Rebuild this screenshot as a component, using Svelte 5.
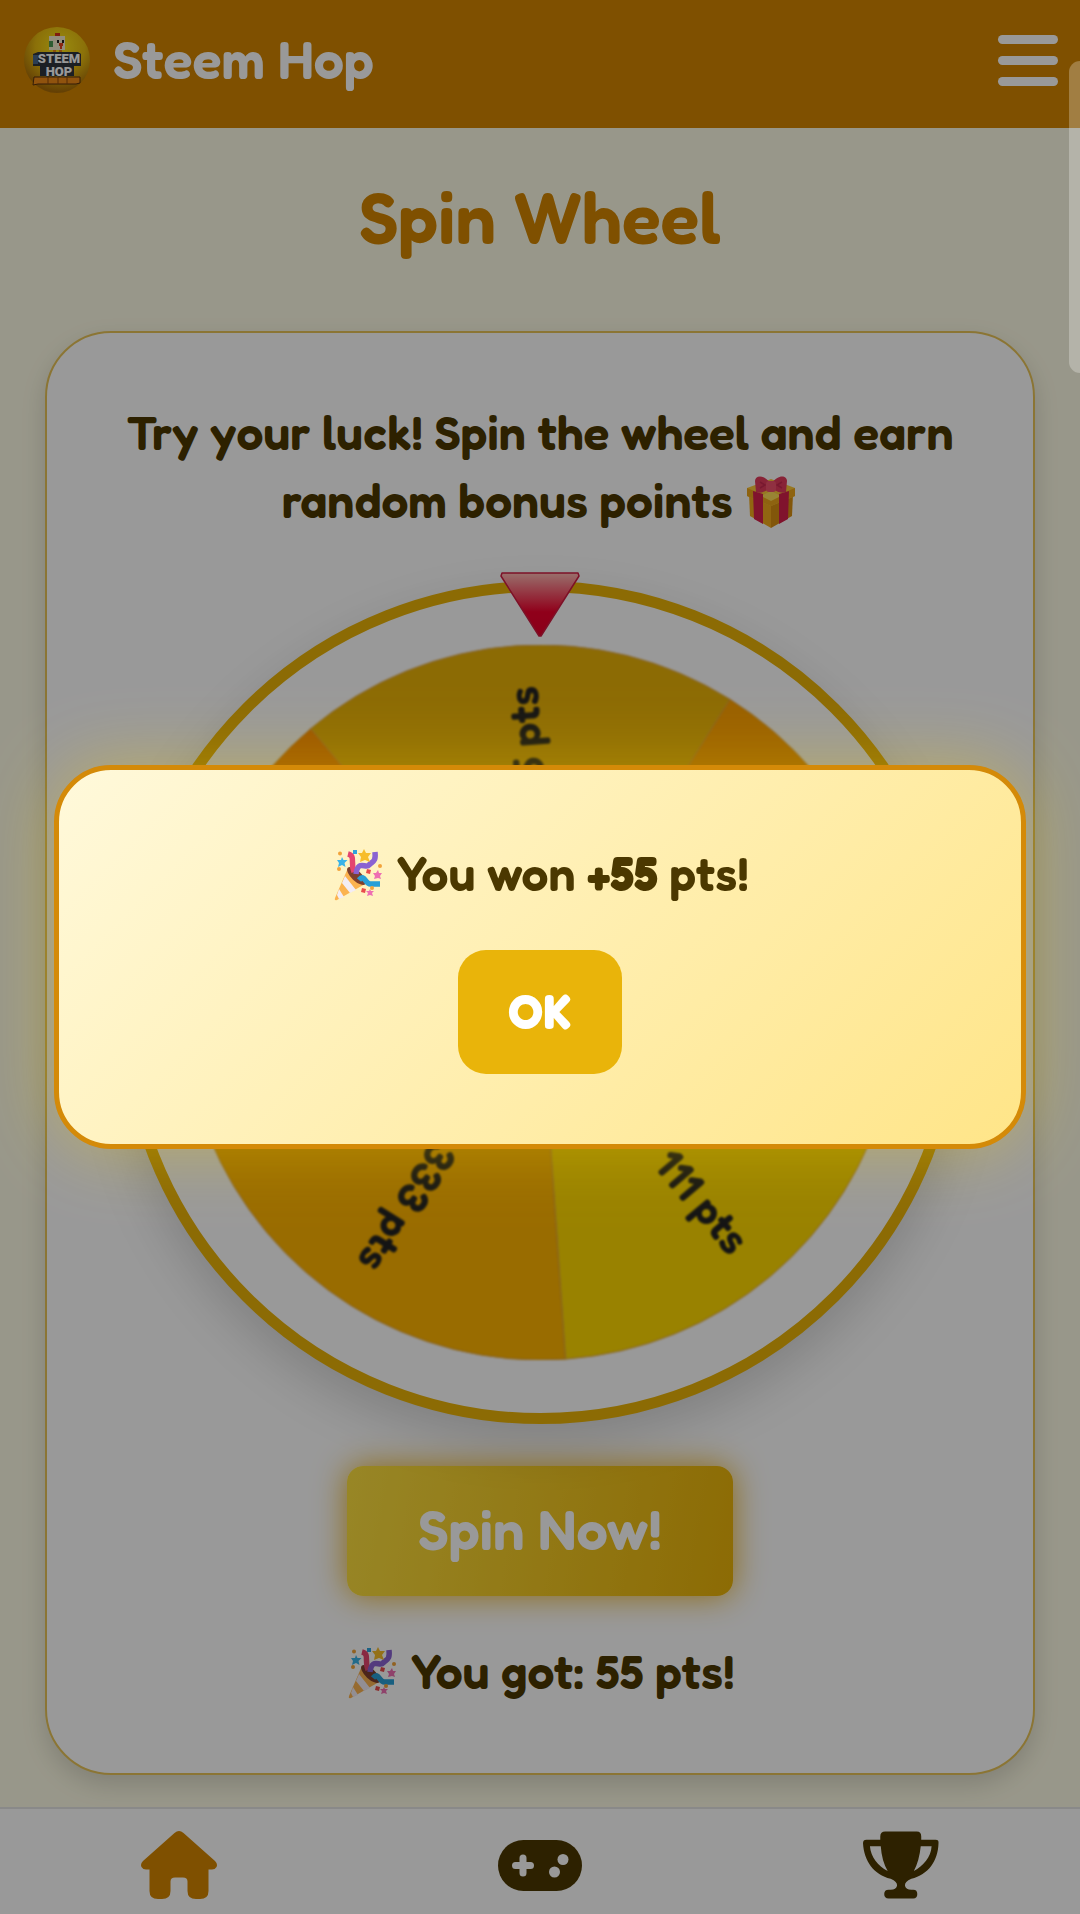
<script>
  let open = $state(true);
  const prize = 55;
  const size = 358;
  const tilt = -4;
  const slices = [
    { label: '55 pts', color: '#eab308' },
    { label: '77 pts', color: '#ffa000' },
    { label: '111 pts', color: '#ffd900' },
    { label: '333 pts', color: '#ffb400' },
    { label: '22 pts', color: '#ff8f00' }
  ];
  const step = 360 / slices.length;

  function point(deg) {
    const a = (deg * Math.PI) / 180;
    return `${(Math.sin(a) * size).toFixed(2)} ${(-Math.cos(a) * size).toFixed(2)}`;
  }
  function wedge(i) {
    const mid = tilt + i * step;
    return `M0 0L${point(mid - step / 2)}A${size} ${size} 0 0 1 ${point(mid + step / 2)}Z`;
  }
</script>

{#snippet party()}
  <svg class="emoji" viewBox="0 0 48 52" role="img" aria-label="Party popper">
    <path d="M14 19L31 35L3 51Q0 52 1 49Z" fill="#fbb350" />
    <path d="M11 27L22 41L16 44L8 34Z M5 40L10 48L5 50L3 46Z" fill="#f3edf5" />
    <ellipse cx="22.500" cy="27" rx="12" ry="5" transform="rotate(43 22.500 27)" fill="#7d3f2d" />
    <path d="M14 5C22 7 16 14 20 23" fill="none" stroke="#e4456f" stroke-width="5.500" />
    <path d="M22 25C24 10 32 20 35 16C39 12 42 13 41 3" fill="none" stroke="#8a63d2" stroke-width="5.500" />
    <path d="M25 31C31 24 31 36 37 35Q42 35 46 35" fill="none" stroke="#289fd6" stroke-width="5.500" />
    <path d="M30 0l2 4 5 0-3 4 2 5-5-2-5 2 1-5-3-4 4 0z" fill="#f7bd2b" />
    <path d="M8 8l1.500 3 4 0-3 3 1 4-3.500-2-4 2 1-4-2-3 4 0z" fill="#3bb3e8" />
    <path d="M44 21l1 3 3 0-2 3 1 3-3-1-4 1 1-3-2-3 3 0z" fill="#ee6fb2" />
    <path d="M36 40l1 2 3 0-2 2 1 3-3-1-3 1 1-3-2-2 3 0z" fill="#ee6fb2" />
    <path d="M19 1h4v4h-4z" fill="#2fa3dc" />
    <path d="M33 20l4 1-1 4-4-1zM28 39l4 1-1 4-4-1z" fill="#e94b4b" />
    <circle cx="6" cy="4.500" r="2" fill="#f2a33a" />
    <circle cx="5" cy="20" r="2" fill="#f2a33a" />
    <circle cx="46" cy="17" r="2" fill="#f2a33a" />
    <circle cx="38" cy="39" r="2" fill="#f2a33a" />
  </svg>
{/snippet}

<div class="page">
  <header>
    <a class="brand" href="#home">
      <svg class="logo" viewBox="0 0 66 66" aria-hidden="true">
        <defs>
          <radialGradient id="sun" cx="55%" cy="30%" r="68%">
            <stop offset="0" stop-color="#ffe818" />
            <stop offset=".55" stop-color="#e8bc10" />
            <stop offset="1" stop-color="#a86c08" />
          </radialGradient>
        </defs>
        <circle cx="33" cy="33" r="33" fill="url(#sun)" />
        <path d="M31 6h5v4h-5z" fill="#d8301a" />
        <path d="M25 9h16v14H25z" fill="#f5edd0" />
        <path d="M25 14h4v6h-4z" fill="#4f9a55" />
        <path d="M33 13h2v3h-2zM38 13h2v3h-2z" fill="#222" />
        <path d="M35 16h4v3h-1v3h-2v-3h-1z" fill="#e5401c" />
        <path d="M29 23h3v3h-3zM35 23h3v3h-3z" fill="#e88716" />
        <path d="M9 27l5-2h40l3 2v12h-7v10H16v-10H9z" fill="#30343c" />
        <path d="M9 28h5v9H9z" fill="#48678a" />
        <path d="M10 50h46v6l-4 1H14l-5 1z" fill="#f08a18" stroke="#56300c" stroke-width="1" />
        <path d="M24 50v7M34 50v7M43 50v7" stroke="#8c4a0a" stroke-width="1" />
        <text class="logo-text" x="35" y="36">STEEM</text>
        <text class="logo-text" x="35" y="49">HOP</text>
      </svg>
      <span>Steem Hop</span>
    </a>
    <button class="menu" aria-label="Menu"><i></i><i></i><i></i></button>
  </header>

  <main>
    <h1>Spin Wheel</h1>
    <section class="card">
      <p>
        Try your luck! Spin the wheel and earn random bonus points
        <svg class="emoji" viewBox="0 0 48 52" role="img" aria-label="Gift">
          <path d="M2 18L24 27V52L3 40Z" fill="#f2aa1d" />
          <path d="M46 18L24 27V52L45 40Z" fill="#d98f12" />
          <path d="M0 12L24 3L48 12V20L24 30L0 20Z" fill="#fcc93a" />
          <path d="M0 12L24 22L48 12V20L24 30L0 20Z" fill="#eda51b" />
          <path d="M24 15L34 20L24 25L14 20Z" fill="#ffdc58" />
          <path d="M6 15L16 18V48L7 43ZM42 15L32 18V48L41 43Z" fill="#d5214c" />
          <path d="M24 8C16-3 8 0 8 5L9 16C14 18 20 15 24 11C28 15 34 18 39 16L40 5C40 0 32-3 24 8Z" fill="#e33b5c" />
          <path d="M13 6L18 9L13 12M35 6L30 9L35 12" fill="none" stroke="#c82a50" stroke-width="1.500" />
          <rect x="19" y="5" width="10" height="11" rx="3" fill="#f0506d" />
        </svg>
      </p>

      <div class="wheel">
        <svg class="disc" viewBox="-358 -358 716 716" role="img" aria-label="Prize wheel">
          {#each slices as slice, i}
            <path d={wedge(i)} fill={slice.color} stroke="#e0a23c" stroke-width="1" />
          {/each}
          {#each slices as slice, i}
            <text x="317" y="19" transform="rotate({tilt + i * step - 90})">{slice.label}</text>
          {/each}
        </svg>
        <svg class="pointer" viewBox="0 0 80 66" aria-hidden="true">
          <defs>
            <linearGradient id="ruby" x1="0" y1="0" x2="0" y2="1">
              <stop offset="0" stop-color="#ffb9b4" />
              <stop offset=".62" stop-color="#f0002c" />
              <stop offset="1" stop-color="#e6002c" />
            </linearGradient>
          </defs>
          <path d="M2 1H78L79 4L41 64H39L1 4Z" fill="url(#ruby)" stroke="#d01c42" stroke-width="1.500" stroke-linejoin="round" />
        </svg>
      </div>

      <button class="spin">Spin Now!</button>
      <p class="result">{@render party()} You got: {prize} pts!</p>
    </section>
  </main>

  <nav aria-label="Main">
    <a href="#home" class="active" aria-label="Home">
      <svg width="76" height="68" viewBox="0 0 76 68">
        <path d="M33.500 2Q38 -2 42.500 2L74 30Q77 33 75.500 36Q74 38.500 71 38.500H67.500V60Q67.500 68 59 68H55Q46.500 68 46.500 60V50.500Q46.500 46.500 42 46.500H34Q29.500 46.500 29.500 50.500V60Q29.500 68 21 68H17Q8.500 68 8.500 60V38.500H5Q2 38.500 .5 36Q-1 33 2 30Z" />
      </svg>
    </a>
    <a href="#games" aria-label="Games">
      <svg width="84" height="51" viewBox="0 0 84 51">
        <rect width="84" height="51" rx="25.500" />
        <path class="hole-line" d="M25 18V33M17.500 25.500H32.500" />
        <circle class="hole" cx="65" cy="19.500" r="5.500" />
        <circle class="hole" cx="56.500" cy="32" r="5.500" />
      </svg>
    </a>
    <a href="#ranking" aria-label="Ranking">
      <svg width="76" height="68" viewBox="0 0 77 68">
        <path fill-rule="evenodd" d="M17.500 5Q17.500 0 22.500 0H54.500Q59 0 59 5V8.500H73.500Q77 8.500 76.500 12C76 30 66 44 49 48Q42 51 42.500 55Q43.500 59 49 59H51Q55 59 55 63.500Q55 68 51 68H26Q21.500 68 21.500 63.500Q21.500 59 26 59H28Q33.500 59 34.500 55Q35 51 28 48C11 44 1 30 0 12Q0 8.500 3.500 8.500H17.500ZM58.500 15H69.500C69 26 61 35 51.500 40Q57 30 58.500 15ZM18 15H7C8 26 15 35 25 40Q19 30 18 15Z" />
      </svg>
    </a>
  </nav>
</div>

{#if open}
  <div class="overlay">
    <div class="dialog" role="dialog" aria-modal="true" aria-labelledby="won">
      <p id="won">{@render party()} You won <strong>+{prize}</strong> pts!</p>
      <button class="ok" onclick={() => (open = false)}>OK</button>
    </div>
  </div>
{/if}
<div class="edge-handle"></div>

<style>
  :global(body) {
    margin: 0;
    background: #fefce6;
    font-family: Fredoka, Lato, sans-serif;
    font-weight: 600;
    color: #4b3800;
  }
  * {
    box-sizing: border-box;
  }
  button {
    font: inherit;
    border: 0;
    cursor: pointer;
  }
  .page {
    display: flex;
    flex-direction: column;
    min-height: 100vh;
  }
  header {
    display: flex;
    align-items: center;
    justify-content: space-between;
    padding: 27px 22px 35px 24px;
    background: #d48600;
  }
  .brand {
    display: flex;
    align-items: center;
    gap: 23px;
    color: #fff;
    font-size: 54px;
    line-height: 60px;
    text-decoration: none;
  }
  .brand span {
    padding-bottom: 3px;
  }
  .logo {
    width: 66px;
    height: 66px;
  }
  .logo-text {
    font: 900 13px Roboto, sans-serif;
    fill: #fff;
    stroke: #30343c;
    stroke-width: 1px;
    paint-order: stroke;
    text-anchor: middle;
  }
  .menu {
    display: grid;
    gap: 12px;
    width: 60px;
    padding: 0;
    background: none;
  }
  .menu i {
    height: 9px;
    border-radius: 5px;
    background: #fff;
  }
  main {
    flex: 1;
    padding: 45px 45px 30px;
  }
  h1 {
    margin: 0 0 70px;
    font-size: 72px;
    font-weight: 600;
    line-height: 88px;
    text-align: center;
    color: #d48600;
  }
  .card {
    display: flex;
    flex-direction: column;
    align-items: center;
    padding: 65px 64px 68px;
    border: 2px solid #e8c458;
    border-radius: 66px;
    background: #fff;
    box-shadow: 0 10px 24px rgba(0, 0, 0, 0.15);
  }
  p {
    margin: 0;
    font-size: 48px;
    line-height: 68px;
    text-align: center;
  }
  strong,
  .ok {
    font-family: 'Fredoka One', Fredoka, Lato, sans-serif;
    font-weight: 700;
  }
  .emoji {
    width: 48px;
    height: 52px;
    margin: 0 3px;
    vertical-align: -10px;
  }
  .wheel {
    position: relative;
    width: 100%;
    max-width: 843px;
    margin: 47px 0 42px;
    padding: 53px;
    border: 11px solid #eab308;
    border-radius: 50%;
    background: #fff;
    box-shadow: 0 20px 50px rgba(0, 0, 0, 0.16);
  }
  .disc {
    display: block;
    width: 100%;
    filter: blur(1px);
  }
  .disc text {
    font-size: 43px;
    fill: #222;
    text-anchor: end;
  }
  .pointer {
    position: absolute;
    top: -20px;
    left: 50%;
    width: 80px;
    height: 66px;
    transform: translateX(-50%);
  }
  .spin {
    padding: 29px 71px 33px;
    border-radius: 16px;
    background: linear-gradient(100deg, #fde040, #eab308);
    box-shadow: 0 0 32px rgba(234, 170, 8, 0.9);
    color: #fff;
    font-size: 56px;
    line-height: 68px;
  }
  .result {
    margin-top: 41px;
  }
  nav {
    display: flex;
    align-items: center;
    justify-content: space-around;
    padding: 22px 0 15px;
    border-top: 2px solid #e5e5e5;
    background: #fff;
  }
  nav a {
    display: flex;
    color: #4b3800;
  }
  nav a.active {
    color: #d48600;
  }
  nav svg {
    fill: currentColor;
  }
  nav .hole {
    fill: #fff;
  }
  nav .hole-line {
    stroke: #fff;
    stroke-width: 7px;
    stroke-linecap: round;
  }
  .overlay {
    position: fixed;
    inset: 0;
    display: grid;
    place-items: center;
    background: rgba(0, 0, 0, 0.4);
  }
  .dialog {
    display: flex;
    flex-direction: column;
    align-items: center;
    gap: 43px;
    width: 90%;
    padding: 69px 70px 70px;
    border: 5px solid #d48a08;
    border-radius: 57px;
    background: linear-gradient(135deg, #fff9db, #ffe588);
    box-shadow: 0 0 70px rgba(255, 215, 0, 0.34);
  }
  .ok {
    padding: 27px 50px 29px;
    border-radius: 28px;
    background: #e9b40a;
    color: #fff;
    font-size: 48px;
    line-height: 68px;
  }
  .edge-handle {
    position: fixed;
    top: 61px;
    right: 0;
    width: 11px;
    height: 312px;
    border-radius: 11px 0 0 11px;
    background: rgba(255, 255, 255, 0.26);
  }
</style>
